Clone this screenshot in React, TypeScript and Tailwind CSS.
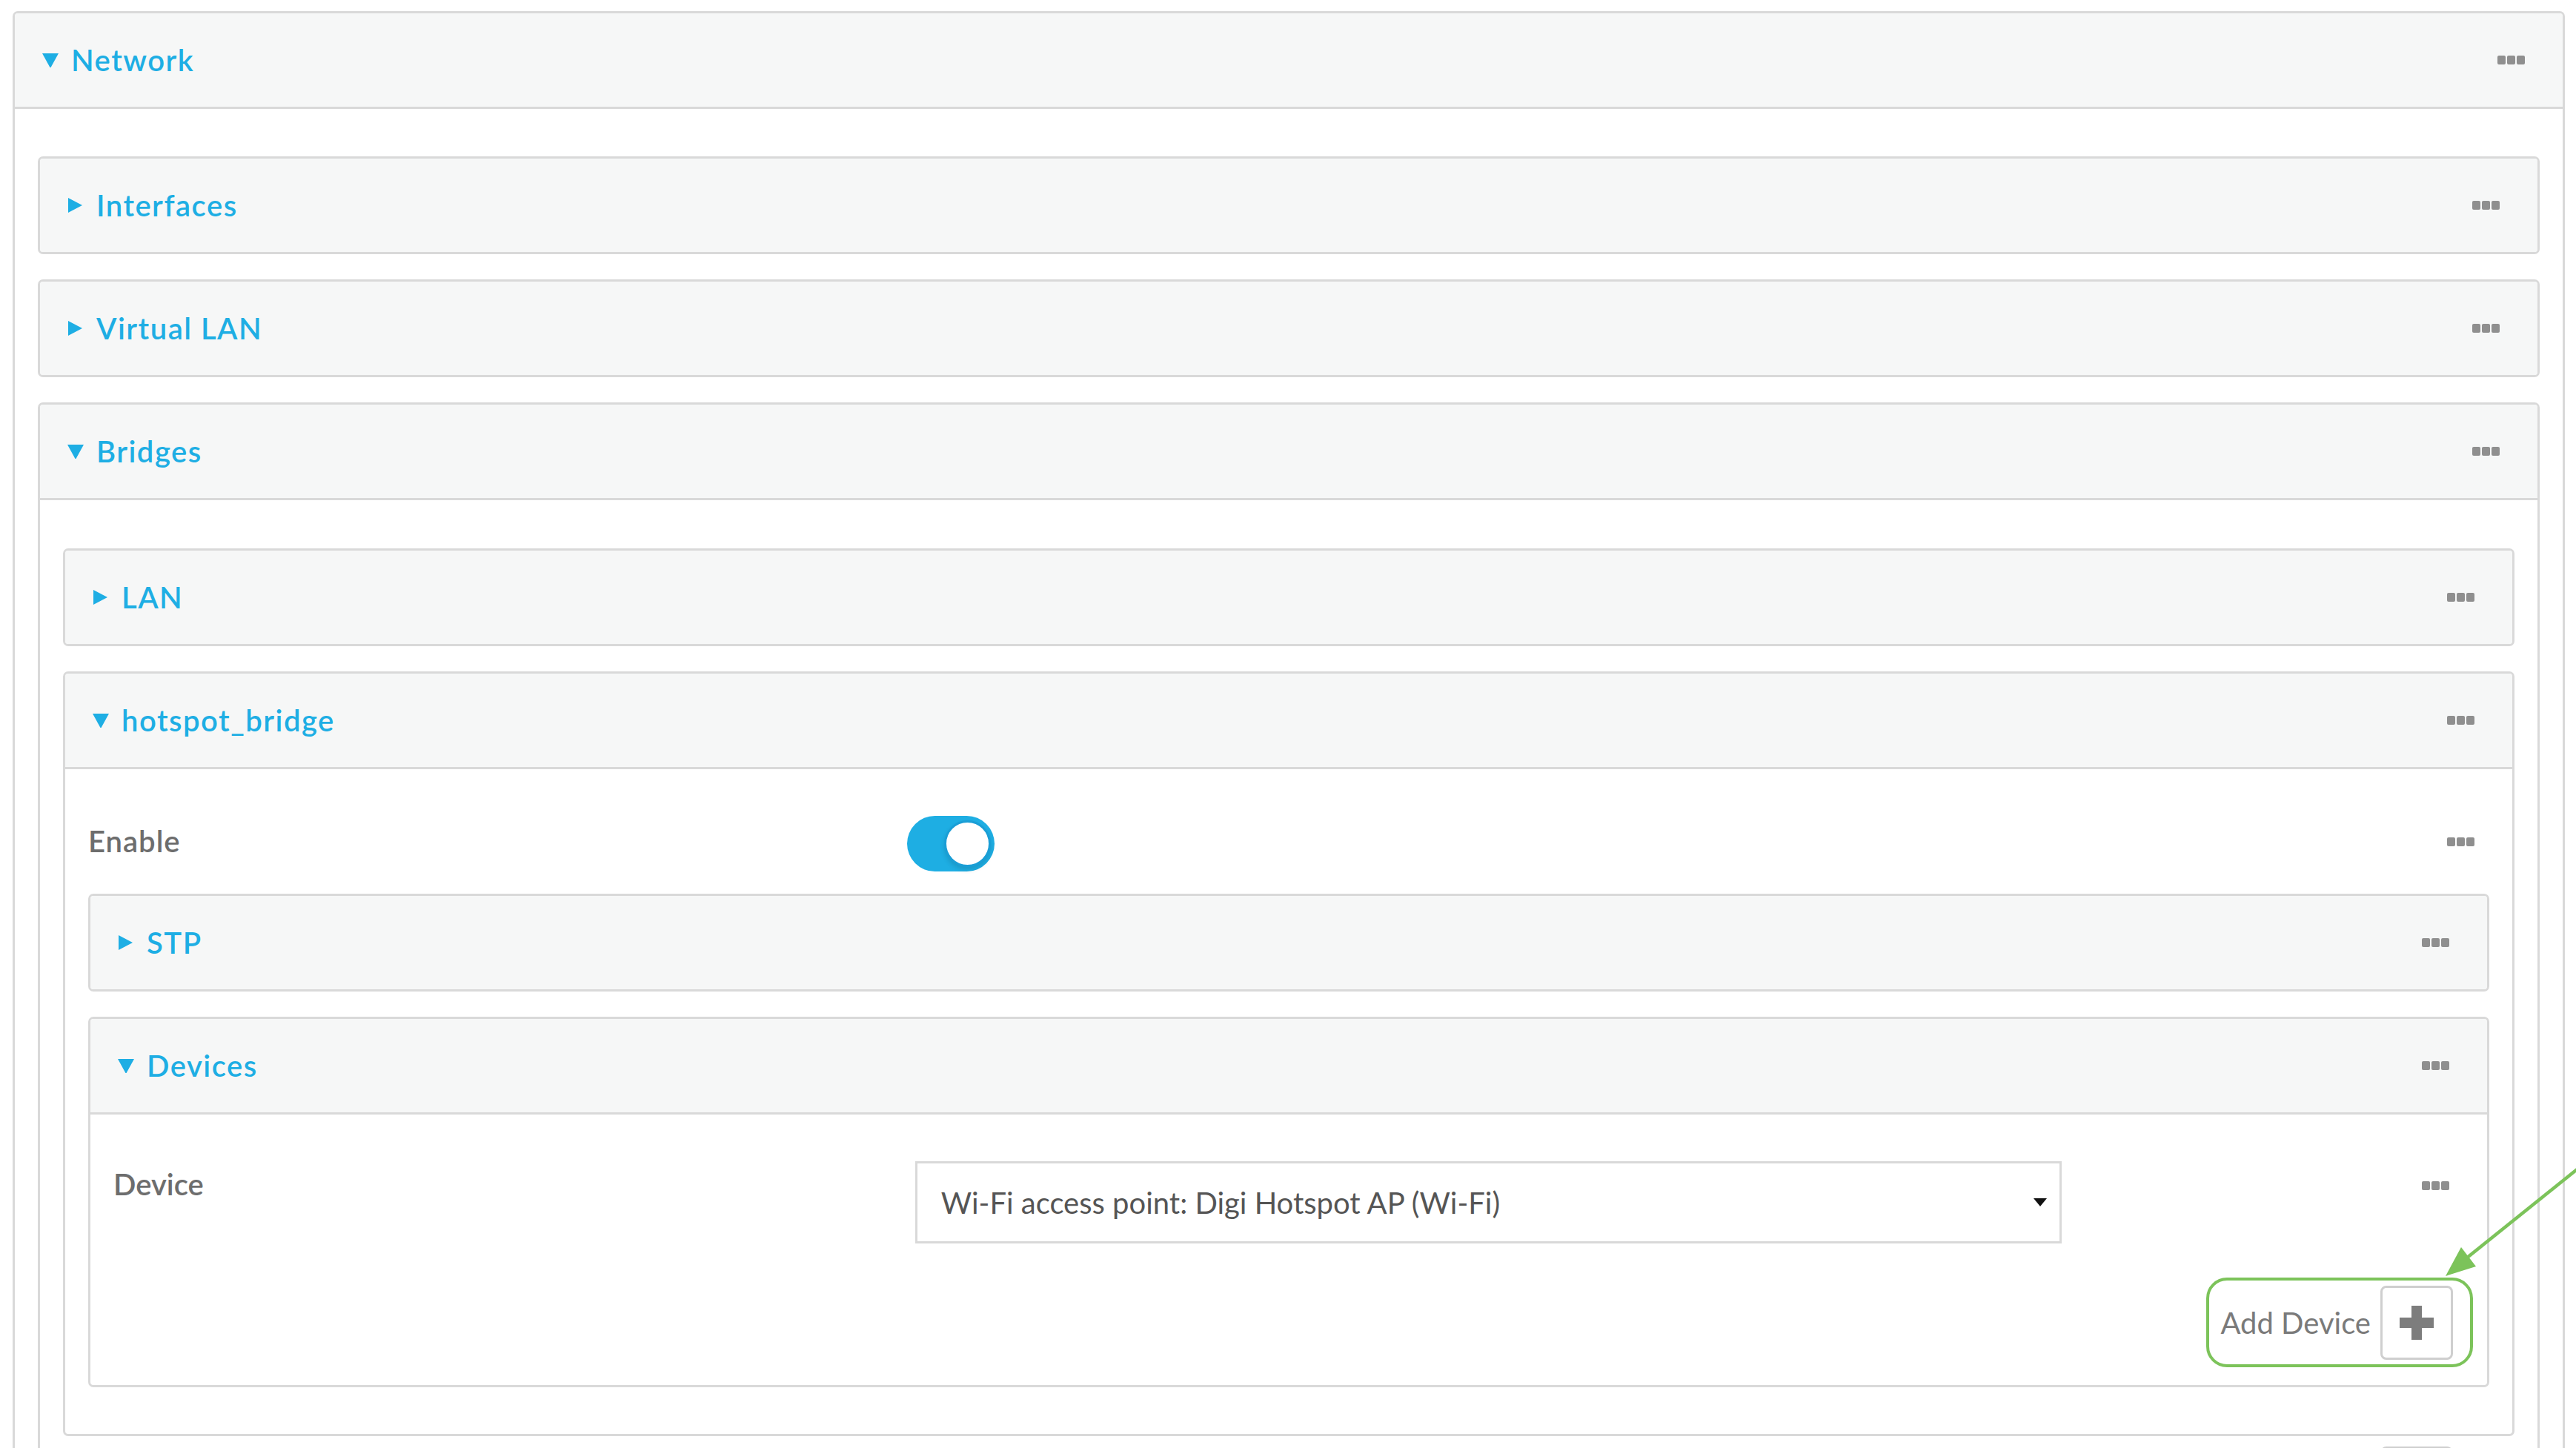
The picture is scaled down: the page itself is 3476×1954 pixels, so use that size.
import type { ReactNode } from 'react';

// Small three-square "more" glyph used on every row and header.
function Dots() {
  return (
    <div className="flex gap-[2px] shrink-0">
      <span className="w-[11px] h-[12px] rounded-[2px] bg-[#8f8f8f]" />
      <span className="w-[11px] h-[12px] rounded-[2px] bg-[#8f8f8f]" />
      <span className="w-[11px] h-[12px] rounded-[2px] bg-[#8f8f8f]" />
    </div>
  );
}

function Caret({ open }: { open: boolean }) {
  return (
    <span className="w-[39px] shrink-0 flex items-center">
      {open ? (
        <svg width="22" height="20" viewBox="0 0 22 20" fill="#1eaee4">
          <path d="M0 1h22L11 21z" />
        </svg>
      ) : (
        <svg width="20" height="20" viewBox="0 0 20 20" fill="#1eaee4">
          <path d="M1 0l19 10L1 20z" />
        </svg>
      )}
    </span>
  );
}

// Header height includes its bottom rule when open (border-box), so the
// open variant is 3px taller to keep the grey band the same size.
function Panel({ title, open = false, children }: { title: string; open?: boolean; children?: ReactNode }) {
  return (
    <div className="border-[3px] border-[#d9d9d9] rounded-[7px] bg-white overflow-hidden">
      <div
        className={
          'flex items-center pl-[37px] pr-[51px] bg-[#f6f7f7]' +
          (open ? ' h-[129px] border-b-[3px] border-[#d9d9d9]' : ' h-[126px]')
        }
      >
        <Caret open={open} />
        <span className="text-[40px] font-semibold text-[#1eaee4] leading-none tracking-[1.5px]">{title}</span>
        <div className="flex-1" />
        <Dots />
      </div>
      {open && children}
    </div>
  );
}

function PlusBox() {
  return (
    <div className="w-[98px] h-[100px] border-[3px] border-[#cfcfcf] rounded-[8px] bg-white flex items-center justify-center">
      <svg width="46" height="46" viewBox="0 0 46 46" fill="#7d7d7d">
        <rect x="16" y="0" width="14" height="46" />
        <rect x="0" y="16" width="46" height="14" />
      </svg>
    </div>
  );
}

export default function App() {
  return (
    <div className="relative w-[3476px] h-[1954px] overflow-hidden bg-white pt-[15px] pl-[17px] pr-[15px] font-[Lato,'Liberation_Sans',sans-serif]">
      <Panel title="Network" open>
        <div className="pt-[64px] px-[31px] flex flex-col gap-[34px]">
          <Panel title="Interfaces" />
          <Panel title="Virtual LAN" />
          <Panel title="Bridges" open>
            <div className="pt-[65px] px-[31px] flex flex-col gap-[34px]">
              <Panel title="LAN" />
              <Panel title="hotspot_bridge" open>
                <div className="pt-[63px] pb-[63px] px-[31px] flex flex-col">
                  <div className="h-[75px] flex items-center">
                    <span className="w-[34.1%] text-[40px] font-semibold text-[#6d6d6d] leading-none tracking-[1px] -mt-[8px]">
                      Enable
                    </span>
                    <div className="w-[118px] h-[75px] rounded-full bg-[#1eaee3] flex items-center justify-end pr-[5px]">
                      <div className="w-[63px] h-[63px] rounded-full bg-white border-[3px] border-[#1a9ed6] shadow-[0_4px_6px_rgba(0,0,0,0.12)]" />
                    </div>
                    <div className="flex-1" />
                    <div className="mr-[20px] -mt-[6px]">
                      <Dots />
                    </div>
                  </div>
                  <div className="mt-[30px] flex flex-col gap-[34px]">
                    <Panel title="STP" />
                    <Panel title="Devices" open>
                      <div className="pt-[63px] pb-[24px] px-[31px] flex flex-col">
                        <div className="flex items-start">
                          <span className="w-[34.1%] text-[40px] font-semibold text-[#6d6d6d] leading-[48px] mt-[7px]">
                            Device
                          </span>
                          <div className="w-[1547px] h-[111px] border-[3px] border-[#d9d9d9] bg-white flex items-center pl-[32px] pr-[17px]">
                            <span className="text-[40px] text-[#555555] leading-none">
                              Wi-Fi access point: Digi Hotspot AP (Wi-Fi)
                            </span>
                            <div className="flex-1" />
                            <svg width="18" height="11" viewBox="0 0 18 11" fill="#111111">
                              <path d="M0 0h18L9 11z" />
                            </svg>
                          </div>
                          <div className="flex-1" />
                          <div className="mr-[20px] mt-[27px]">
                            <Dots />
                          </div>
                        </div>
                        <div className="mt-[46px] flex justify-end">
                          <div className="-mr-[12px] w-[360px] h-[121px] border-[4px] border-[#7cc35a] rounded-[28px] flex items-center justify-end pr-[23px] gap-[13px]">
                            <span className="text-[40px] text-[#7a7a7a] leading-none">Add Device</span>
                            <PlusBox />
                          </div>
                        </div>
                      </div>
                    </Panel>
                  </div>
                </div>
              </Panel>
              {/* Next row's button, only its top edge shows at the fold */}
              <div className="-mt-[20px] flex justify-end pr-[83px]">
                <PlusBox />
              </div>
            </div>
          </Panel>
        </div>
      </Panel>

      {/* Callout arrow pointing at the Add Device button */}
      <svg
        className="absolute left-0 top-0 pointer-events-none"
        width="3476"
        height="1954"
        viewBox="0 0 3476 1954"
      >
        <line x1="3480" y1="1576" x2="3318" y2="1706" stroke="#7cc35a" strokeWidth="4.5" />
        <path d="M3300 1722 L3321 1683 L3341 1709 Z" fill="#7cc35a" />
      </svg>
    </div>
  );
}
